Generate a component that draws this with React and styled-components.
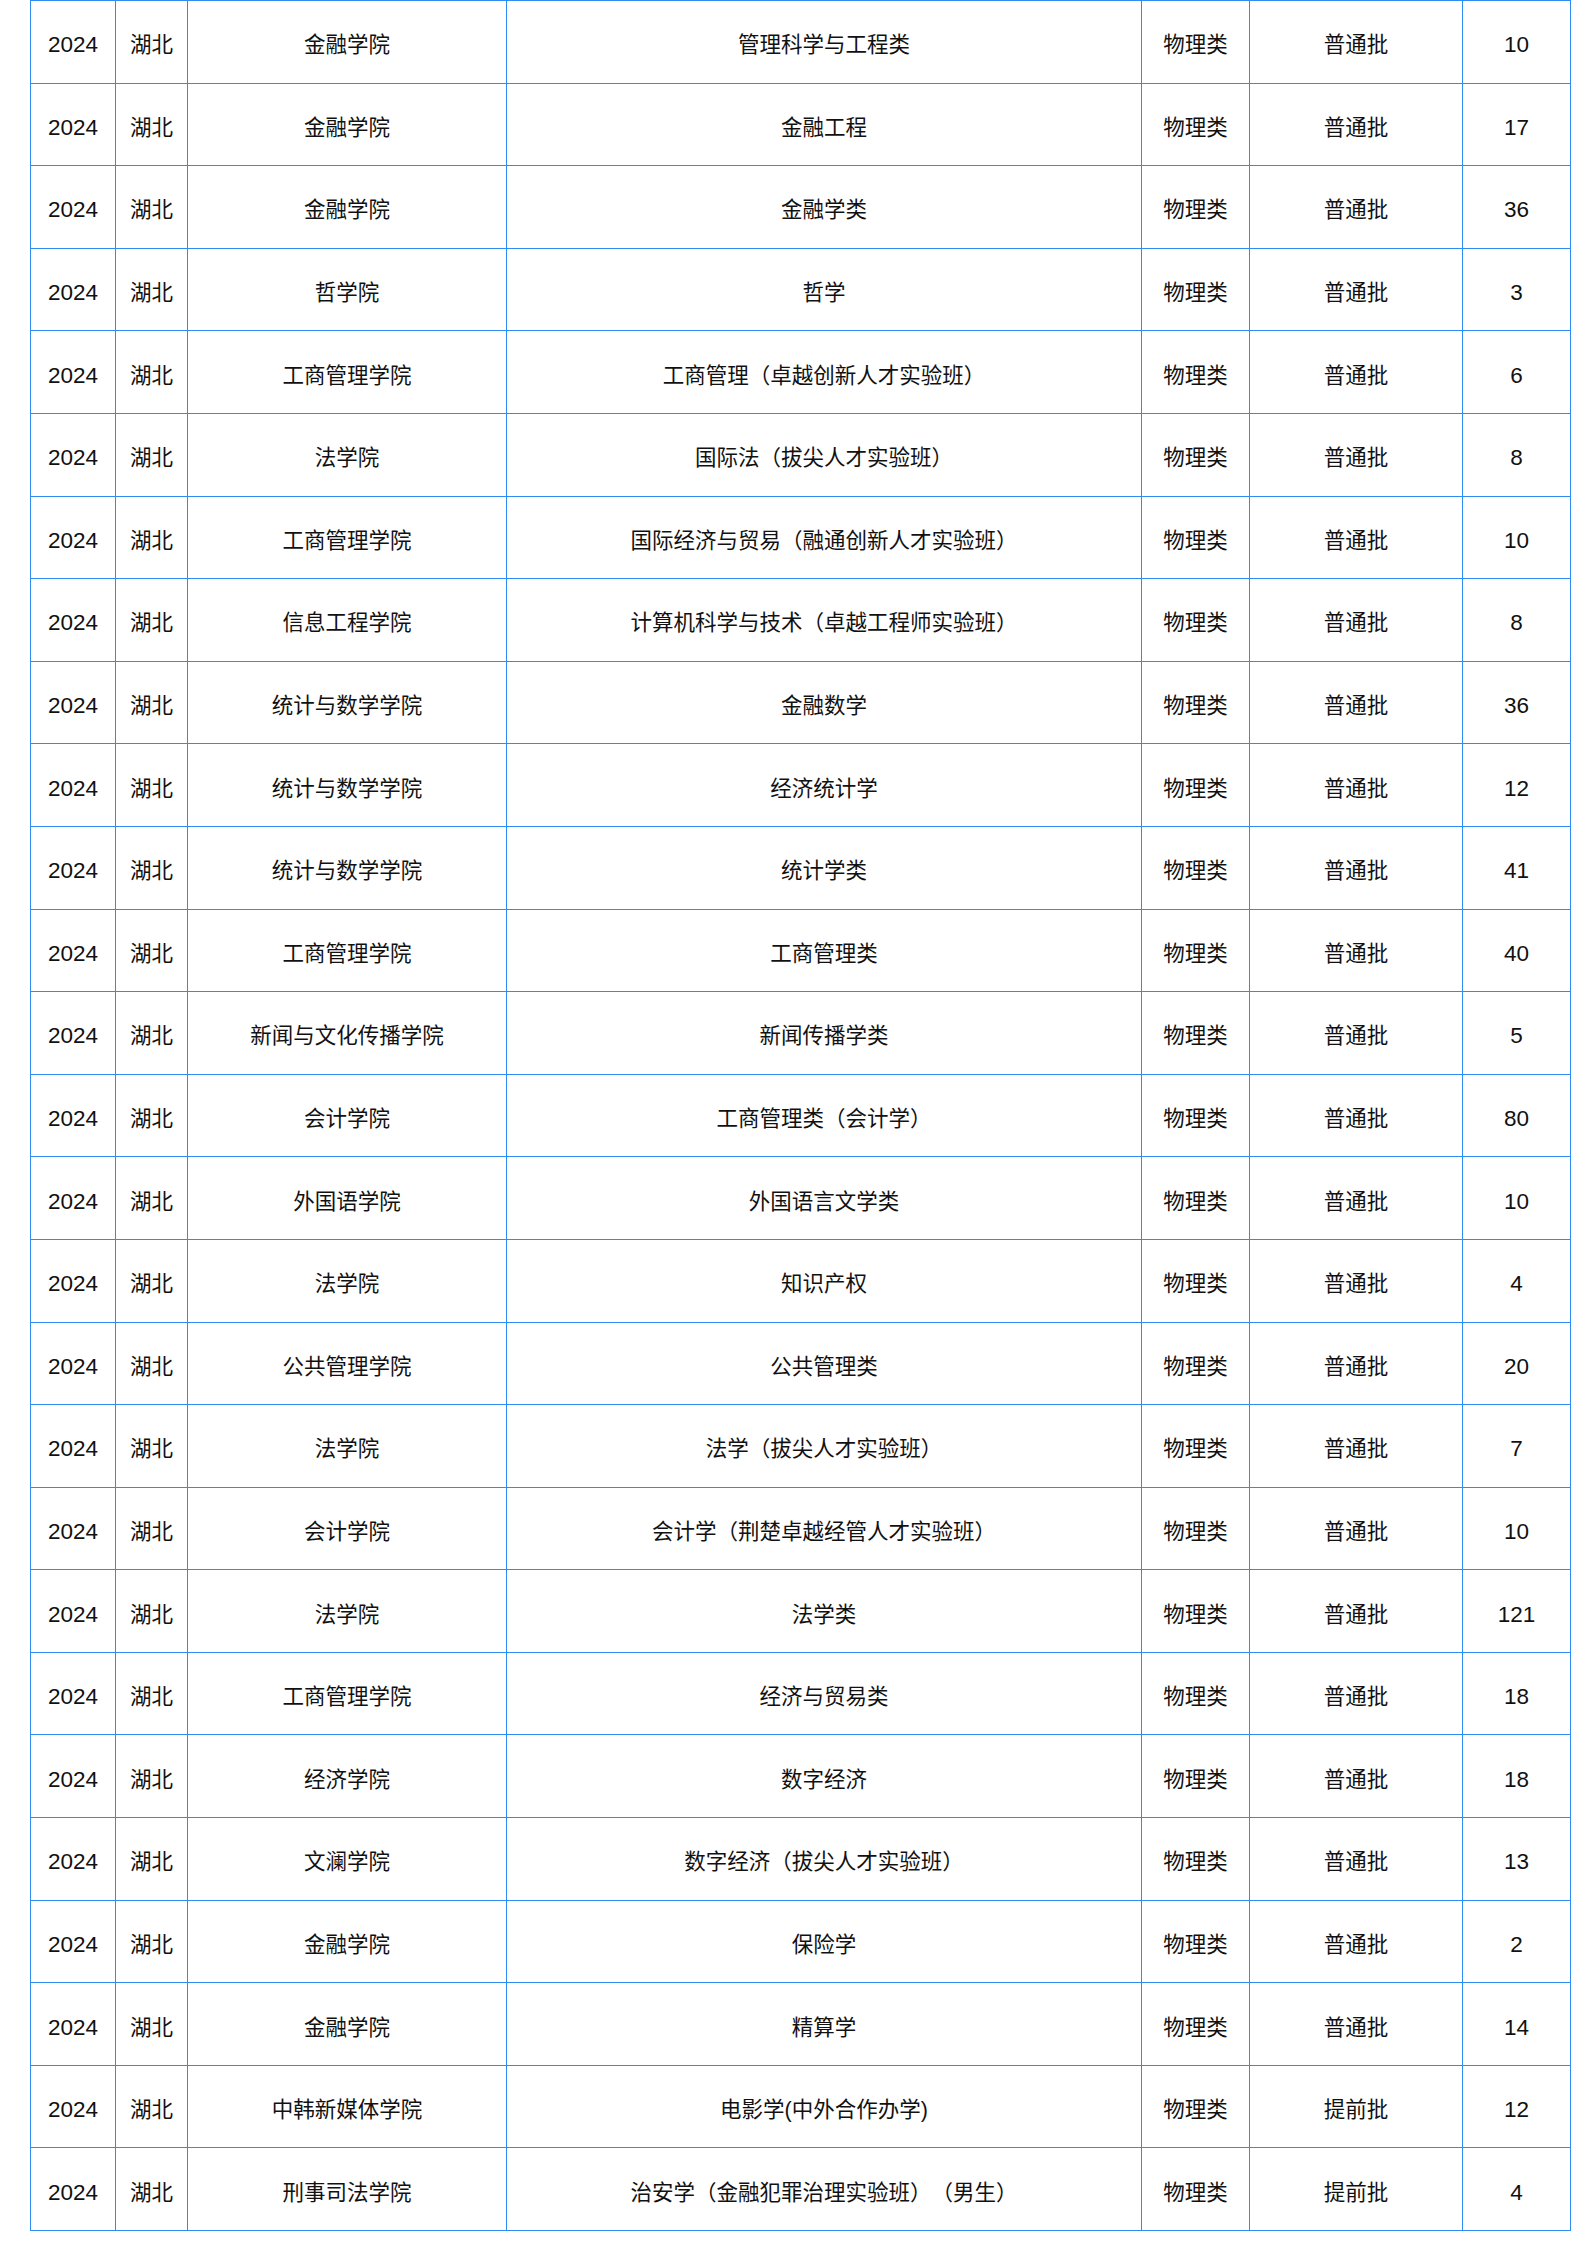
import React from "react";
import styled, { createGlobalStyle } from "styled-components";

const GlobalStyle = createGlobalStyle`
  html, body {
    margin: 0;
    padding: 0;
    background: #ffffff;
  }
  body {
    font-family: "Liberation Sans", "Noto Sans CJK SC", sans-serif;
  }
`;

const Page = styled.div`
  padding-left: 30px;
  width: 1540px;
`;

const Table = styled.table`
  width: 1540px;
  border-collapse: collapse;
  table-layout: fixed;
  font-size: 21.5px;
  color: #111111;
`;

const Col = styled.col`
  width: ${(p) => p.$w}px;
`;

const Row = styled.tr`
  height: 82.6px;
`;

const Cell = styled.td`
  border: 1px solid #2f8cf0;
  text-align: center;
  vertical-align: middle;
  padding: ${(p) => (p.$num ? "7px" : "2px")} 0 0 0;
  font-size: ${(p) => (p.$num ? "22.5px" : "21.5px")};
  white-space: nowrap;
  text-spacing-trim: space-all;
`;

const widths = [85, 72, 319, 635, 108, 213, 108];

const rows = [
  ["金融学院", "管理科学与工程类", "普通批", "10"],
  ["金融学院", "金融工程", "普通批", "17"],
  ["金融学院", "金融学类", "普通批", "36"],
  ["哲学院", "哲学", "普通批", "3"],
  ["工商管理学院", "工商管理（卓越创新人才实验班）", "普通批", "6"],
  ["法学院", "国际法（拔尖人才实验班）", "普通批", "8"],
  ["工商管理学院", "国际经济与贸易（融通创新人才实验班）", "普通批", "10"],
  ["信息工程学院", "计算机科学与技术（卓越工程师实验班）", "普通批", "8"],
  ["统计与数学学院", "金融数学", "普通批", "36"],
  ["统计与数学学院", "经济统计学", "普通批", "12"],
  ["统计与数学学院", "统计学类", "普通批", "41"],
  ["工商管理学院", "工商管理类", "普通批", "40"],
  ["新闻与文化传播学院", "新闻传播学类", "普通批", "5"],
  ["会计学院", "工商管理类（会计学）", "普通批", "80"],
  ["外国语学院", "外国语言文学类", "普通批", "10"],
  ["法学院", "知识产权", "普通批", "4"],
  ["公共管理学院", "公共管理类", "普通批", "20"],
  ["法学院", "法学（拔尖人才实验班）", "普通批", "7"],
  ["会计学院", "会计学（荆楚卓越经管人才实验班）", "普通批", "10"],
  ["法学院", "法学类", "普通批", "121"],
  ["工商管理学院", "经济与贸易类", "普通批", "18"],
  ["经济学院", "数字经济", "普通批", "18"],
  ["文澜学院", "数字经济（拔尖人才实验班）", "普通批", "13"],
  ["金融学院", "保险学", "普通批", "2"],
  ["金融学院", "精算学", "普通批", "14"],
  ["中韩新媒体学院", "电影学(中外合作办学)", "提前批", "12"],
  ["刑事司法学院", "治安学（金融犯罪治理实验班）（男生）", "提前批", "4"],
];

export default function App() {
  return (
    <>
      <GlobalStyle />
      <Page>
        <Table>
          <colgroup>
            {widths.map((w, i) => (
              <Col key={i} $w={w} />
            ))}
          </colgroup>
          <tbody>
            {rows.map(([school, major, batch, num], i) => (
              <Row key={i}>
                <Cell $num>2024</Cell>
                <Cell>湖北</Cell>
                <Cell>{school}</Cell>
                <Cell>{major}</Cell>
                <Cell>物理类</Cell>
                <Cell>{batch}</Cell>
                <Cell $num>{num}</Cell>
              </Row>
            ))}
          </tbody>
        </Table>
      </Page>
    </>
  );
}
